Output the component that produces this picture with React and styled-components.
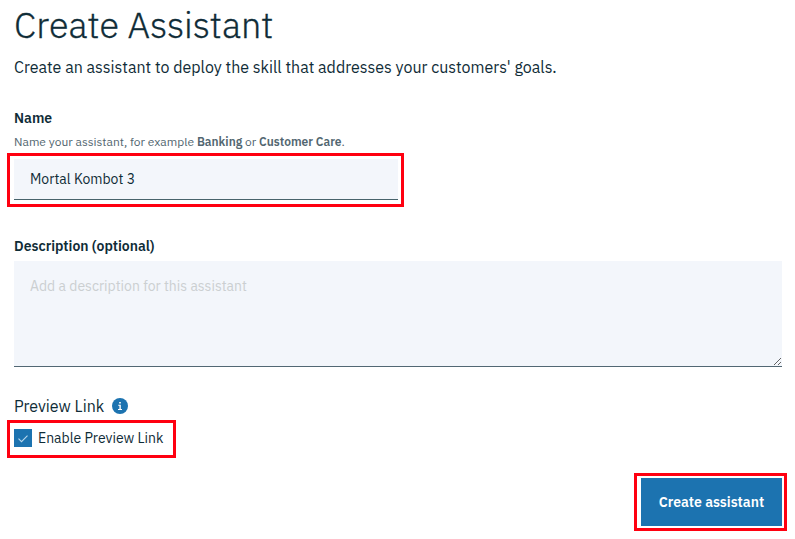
import React from "react";
import styled, { createGlobalStyle, css } from "styled-components";

const GlobalStyle = createGlobalStyle`
  * { box-sizing: border-box; }
  body {
    margin: 0;
    background: #fff;
    color: #0f2c37;
    font-family: "IBM Plex Sans", Roboto, "Liberation Sans", sans-serif;
    -webkit-font-smoothing: antialiased;
    overflow: hidden;
  }
`;

const Page = styled.main`
  display: flex;
  flex-direction: column;
  width: 795px;
  height: 539px;
  padding: 3px 13px 0 14px;
  white-space: nowrap;
`;

const Title = styled.h1`
  margin: 0;
  font-size: 36px;
  font-weight: 300;
  line-height: 44px;
  -webkit-text-stroke: 0.3px currentColor;
`;

const Intro = styled.p`
  margin: 8px 0 0;
  font-size: 16px;
  line-height: 24px;
`;

const Field = styled.section`
  display: flex;
  flex-direction: column;
  margin-top: ${(p) => p.$gap}px;
`;

const Label = styled.label`
  font-size: 14px;
  font-weight: 600;
  line-height: 20px;
`;

const Helper = styled.p`
  margin: 5px 0 8px;
  font-size: 12px;
  line-height: 18px;
  color: #526670;
  strong { font-weight: 600; }
`;

const Highlight = styled.div`
  position: relative;
  width: fit-content;
  &::after {
    content: "";
    position: absolute;
    inset: ${(p) => p.$inset};
    border: 3px solid #ff0010;
    pointer-events: none;
  }
`;

const control = css`
  display: block;
  margin: 0;
  border: 0;
  border-radius: 0;
  outline: 0;
  background: #f3f6fb;
  color: #0f2c37;
  font-family: inherit;
  font-size: 14px;
`;

const TextInput = styled.input`
  ${control}
  width: 384px;
  height: 41px;
  padding: 0 16px;
  border-bottom: 1px solid #47636b;
`;

const TextArea = styled.textarea`
  ${control}
  width: 768px;
  height: 106px;
  margin-top: 5px;
  padding: 15px 16px;
  border-bottom: 1px solid #526773;
  line-height: 20px;
  resize: vertical;
  &::placeholder { color: #cbcfd1; opacity: 1; }
`;

const SectionHeading = styled.h2`
  display: flex;
  align-items: center;
  gap: 8px;
  margin: 27px 0 10px;
  font-size: 16px;
  font-weight: 400;
  line-height: 24px;
`;

const InfoIcon = styled.svg`
  width: 16px;
  height: 16px;
`;

const CheckRow = styled.label`
  display: flex;
  align-items: center;
  gap: 6px;
  height: 20px;
  font-size: 14px;
`;

const CheckBox = styled.span`
  display: flex;
  align-items: center;
  justify-content: center;
  width: 18px;
  height: 18px;
  background: #1c73b0;
`;

const Footer = styled.footer`
  display: flex;
  justify-content: flex-end;
  margin-top: 30px;
`;

const PrimaryButton = styled.button`
  width: 141px;
  height: 48px;
  padding: 0;
  border: 0;
  background: #1c73b0;
  color: #fff;
  font-family: inherit;
  font-size: 14px;
  font-weight: 600;
`;

export default function App() {
  return (
    <>
      <GlobalStyle />
      <Page>
        <Title>Create Assistant</Title>
        <Intro>Create an assistant to deploy the skill that addresses your customers' goals.</Intro>
        <Field $gap={29}>
          <Label htmlFor="name">Name</Label>
          <Helper>
            Name your assistant, for example <strong>Banking</strong> or <strong>Customer Care</strong>.
          </Helper>
          <Highlight $inset="-6px -6px -7px -7px">
            <TextInput id="name" defaultValue="Mortal Kombot 3" />
          </Highlight>
        </Field>
        <Field $gap={36}>
          <Label htmlFor="description">Description (optional)</Label>
          <TextArea id="description" placeholder="Add a description for this assistant" />
        </Field>
        <SectionHeading>
          Preview Link
          <InfoIcon viewBox="0 0 16 16" aria-hidden="true">
            <circle cx="8" cy="8" r="8" fill="#1c73b0" />
            <path d="M7.2 4h1.6v1.6H7.2zM6.2 6.8h2.6V11H10v1H6v-1h1.4V7.8H6.2z" fill="#fff" />
          </InfoIcon>
        </SectionHeading>
        <Highlight $inset="-8px -13px -10px -7px">
          <CheckRow>
            <CheckBox role="checkbox" aria-checked="true">
              <svg width="12" height="10" viewBox="0 0 12 10">
                <path d="M1.5 5.7 4.5 8.7 10.5 2.7" fill="none" stroke="#b9d8ed" strokeWidth="1.1" />
              </svg>
            </CheckBox>
            Enable Preview Link
          </CheckRow>
        </Highlight>
        <Footer>
          <Highlight $inset="-5px -5px -5px -7px">
            <PrimaryButton type="button">Create assistant</PrimaryButton>
          </Highlight>
        </Footer>
      </Page>
    </>
  );
}
